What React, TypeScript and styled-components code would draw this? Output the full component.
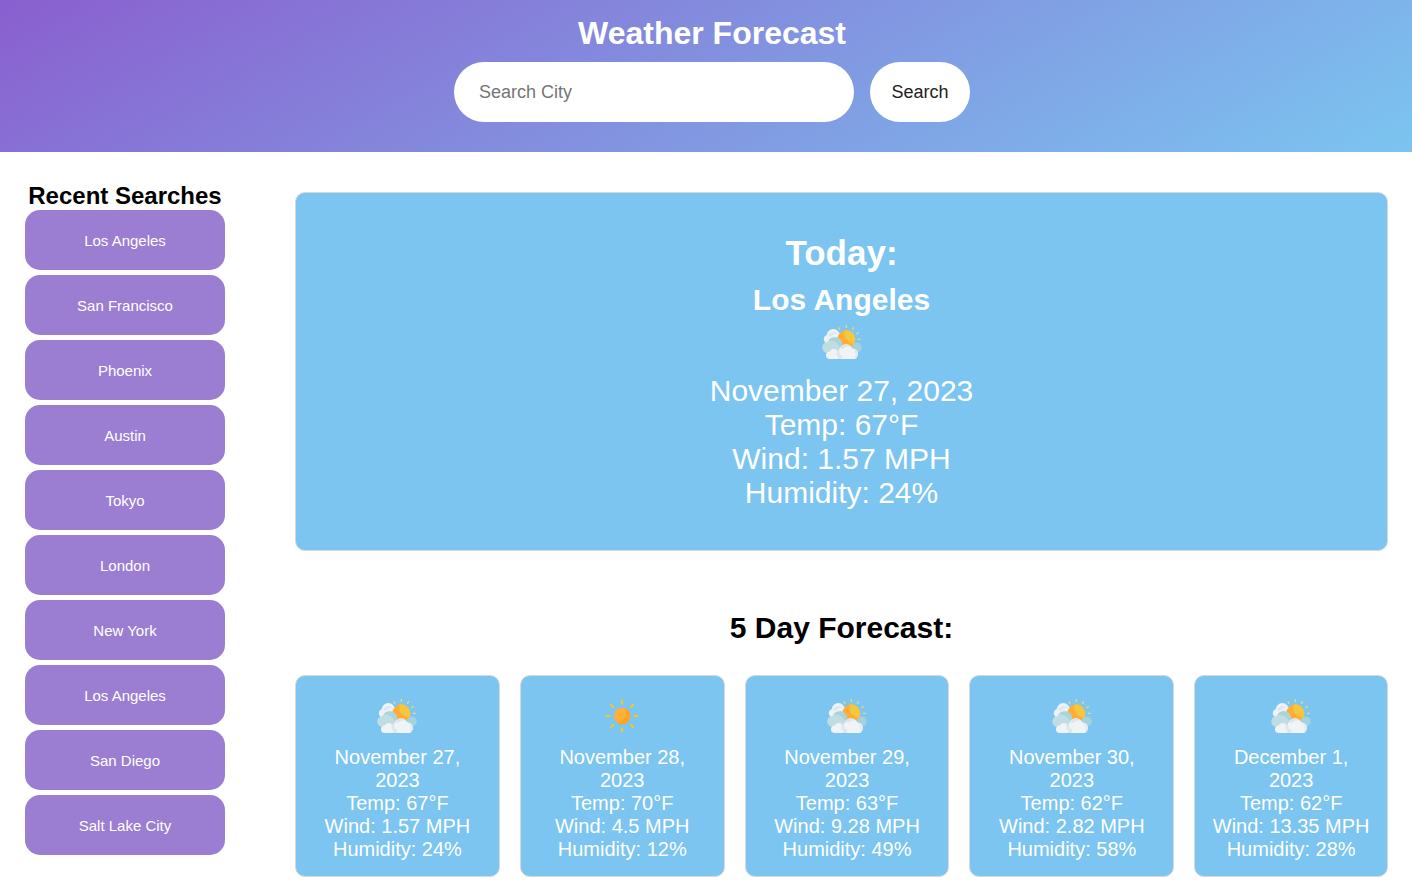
import React from "react";
import styled, { createGlobalStyle } from "styled-components";

const GlobalStyle = createGlobalStyle`
  *, *::before, *::after { box-sizing: border-box; }
  body {
    margin: 0;
    background: #fff;
    color: #000;
    font-family: Arial, "Liberation Sans", Helvetica, sans-serif;
  }
  h1, h2, h3, p, ul { margin: 0; padding: 0; }
  button, input { font-family: inherit; }
`;

const Header = styled.header`
  display: flex;
  flex-direction: column;
  align-items: center;
  padding: 15px 0 30px 12px;
  background: linear-gradient(150deg, #8a5fcf, #7bc5f0);
`;

const Title = styled.h1`
  margin-bottom: 10px;
  color: #fff;
  font-size: 32px;
  line-height: 37px;
`;

const SearchForm = styled.form`
  display: flex;
  gap: 16px;
`;

const SearchInput = styled.input`
  width: 400px;
  height: 60px;
  padding: 0 25px;
  border: 0;
  border-radius: 30px;
  background: #fff;
  font-size: 18px;
  &::placeholder { color: #757575; }
`;

const SearchButton = styled.button`
  width: 100px;
  height: 60px;
  padding: 0;
  border: 0;
  border-radius: 30px;
  background: #fff;
  color: #222;
  font-size: 18px;
  cursor: pointer;
`;

const Layout = styled.div`
  display: flex;
  align-items: flex-start;
  gap: 70px;
  padding: 30px 24px 12px 25px;
`;

const Sidebar = styled.aside`
  flex: none;
  width: 200px;
`;

const SidebarTitle = styled.h2`
  font-size: 24px;
  line-height: 28px;
  text-align: center;
  white-space: nowrap;
`;

const RecentList = styled.ul`
  display: flex;
  flex-direction: column;
  gap: 5px;
  list-style: none;
`;

const RecentButton = styled.button`
  display: block;
  width: 100%;
  height: 60px;
  border: 0;
  border-radius: 15px;
  background: #9b7dd2;
  color: #fff;
  font-size: 15px;
  cursor: pointer;
`;

const Main = styled.main`
  flex: 1;
  min-width: 0;
  padding-top: 10px;
`;

const Card = styled.article<{ $large?: boolean }>`
  padding: ${(p) => (p.$large ? "40px" : "15px")};
  border: 1px solid #d8d8d8;
  border-radius: 10px;
  background: #7bc5f0;
  color: #fff;
  text-align: center;
  font-size: ${(p) => (p.$large ? "30px" : "20px")};
  line-height: ${(p) => (p.$large ? "34px" : "23px")};
`;

const TodayTitle = styled.h2`
  margin-bottom: 10px;
  font-size: 35px;
  line-height: 40px;
`;

const CityName = styled.h3`
  font-size: 30px;
  line-height: 34px;
`;

const Icon = styled.svg<{ $large?: boolean }>`
  display: block;
  width: 50px;
  height: 50px;
  margin: 0 auto ${(p) => (p.$large ? "7px" : "5px")};
`;

const ForecastTitle = styled.h2`
  margin: 60px 0 30px;
  font-size: 30px;
  line-height: 34px;
  text-align: center;
`;

const ForecastGrid = styled.section`
  display: grid;
  grid-template-columns: repeat(4, minmax(0, 37fr)) minmax(0, 35fr);
  gap: 20px;
`;

type Sky = "sunny" | "cloudy";

interface Day {
  date: string;
  sky: Sky;
  temp: number;
  wind: number;
  humidity: number;
}

const recent = [
  "Los Angeles", "San Francisco", "Phoenix", "Austin", "Tokyo",
  "London", "New York", "Los Angeles", "San Diego", "Salt Lake City",
];

const days: Day[] = [
  { date: "November 27, 2023", sky: "cloudy", temp: 67, wind: 1.57, humidity: 24 },
  { date: "November 28, 2023", sky: "sunny", temp: 70, wind: 4.5, humidity: 12 },
  { date: "November 29, 2023", sky: "cloudy", temp: 63, wind: 9.28, humidity: 49 },
  { date: "November 30, 2023", sky: "cloudy", temp: 62, wind: 2.82, humidity: 58 },
  { date: "December 1, 2023", sky: "cloudy", temp: 62, wind: 13.35, humidity: 28 },
];

function WeatherIcon({ sky, large }: { sky: Sky; large?: boolean }) {
  if (sky === "sunny") {
    return (
      <Icon $large={large} viewBox="0 0 50 50" role="img" aria-label="Sunny">
        <g stroke="#f7cb15" strokeWidth="2" strokeLinecap="round">
          {[0, 45, 90, 135, 180, 225, 270, 315].map((angle) => (
            <path key={angle} d="M25 9.500v3" transform={`rotate(${angle} 25 25)`} />
          ))}
        </g>
        <circle cx="25" cy="25" r="8.200" fill="#ffb03b" />
        <path d="M28.500 17.600A8.200 8.200 0 0 1 25 33.200c-1.800 0-3.400-.5-4.700-1.500 6.500 0 10.700-7.200 8.200-14.100z" fill="#ffa41c" />
      </Icon>
    );
  }
  return (
    <Icon $large={large} viewBox="0 0 50 50" role="img" aria-label="Partly cloudy">
      {/* back cloud */}
      <g fill="#edf2f5">
        <circle cx="16.300" cy="18.600" r="6.600" />
        <circle cx="11" cy="22.200" r="4.200" />
        <circle cx="20.500" cy="20.500" r="4.500" />
      </g>
      <path d="M11.200 18.300c1.800-3.200 6.300-4.400 9.800-1.600-3.200-.2-5.600.8-7.600 3.600z" fill="#dde8ed" />
      {/* sun */}
      <circle cx="29.300" cy="22.300" r="9" fill="#ffad38" />
      <path d="M27.500 13.500a9 9 0 0 1 9.700 13c-6.700-.3-11.200-6.200-9.700-13z" fill="#f5c73d" />
      <g stroke="#e6dc7c" strokeWidth="1.300" strokeLinecap="round">
        <path d="M22 10.800l.8 1.600M29.300 8.500v1.900M36.400 10.800l-.8 1.600M41.300 15.700l-1.500 1M43.300 22.300h-2" />
      </g>
      {/* side cloud */}
      <circle cx="39.700" cy="30.500" r="5" fill="#a3d2dc" />
      {/* middle cloud */}
      <g fill="#c1dde4">
        <circle cx="10.900" cy="30.500" r="5.600" />
        <circle cx="17.500" cy="27.800" r="7.500" />
        <path d="M11 28h13l-1 8H11z" />
      </g>
      <path d="M11.500 23.500c3.500-4.500 10.500-4.200 13 1.200 1.300 3.300.6 6.300-1.500 8.300.3-5.300-4.500-9.800-11.500-9.500z" fill="#a9d4dc" />
      {/* front cloud */}
      <g fill="#f0f4f7">
        <circle cx="12.800" cy="38.200" r="3.800" />
        <circle cx="16.800" cy="36.300" r="4.300" />
        <circle cx="29" cy="34.500" r="7.200" />
        <circle cx="35.800" cy="36.800" r="5.200" />
        <path d="M12.800 36h26.500v4a2 2 0 0 1-2 2H12.800z" />
      </g>
      <path d="M18.500 32.400c3.300.2 5 3 4 5.200 3.200.3 3.700 3.200 1.300 4.400h-3.600c2-1.600 1.400-3.400-1-3.700.9-2.300.6-4.400-.7-5.900z" fill="#dfe7ec" />
      <path d="M22.500 31.300c1.800-4 8-5.300 11.200-1.600-3.200-.8-5.700-.1-7.500 2.200z" fill="#dde6eb" />
      <path d="M36.500 32.300c4.300 1 5.300 5.600 3 8.600l-2.200 1.100c1.800-3 1.600-6.500-.8-9.700z" fill="#e3eaee" />
    </Icon>
  );
}

function Conditions({ day }: { day: Day }) {
  return (
    <>
      <p>{day.date}</p>
      <p>{`Temp: ${day.temp}°F`}</p>
      <p>{`Wind: ${day.wind} MPH`}</p>
      <p>{`Humidity: ${day.humidity}%`}</p>
    </>
  );
}

export default function App() {
  return (
    <>
      <GlobalStyle />
      <Header>
        <Title>Weather Forecast</Title>
        <SearchForm onSubmit={(e) => e.preventDefault()}>
          <SearchInput type="text" placeholder="Search City" aria-label="Search City" />
          <SearchButton type="submit">Search</SearchButton>
        </SearchForm>
      </Header>
      <Layout>
        <Sidebar>
          <SidebarTitle>Recent Searches</SidebarTitle>
          <RecentList>
            {recent.map((city, i) => (
              <li key={i}>
                <RecentButton type="button">{city}</RecentButton>
              </li>
            ))}
          </RecentList>
        </Sidebar>
        <Main>
          <Card $large>
            <TodayTitle>Today:</TodayTitle>
            <CityName>Los Angeles</CityName>
            <WeatherIcon sky={days[0].sky} large />
            <Conditions day={days[0]} />
          </Card>
          <ForecastTitle>5 Day Forecast:</ForecastTitle>
          <ForecastGrid>
            {days.map((day) => (
              <Card key={day.date}>
                <WeatherIcon sky={day.sky} />
                <Conditions day={day} />
              </Card>
            ))}
          </ForecastGrid>
        </Main>
      </Layout>
    </>
  );
}
